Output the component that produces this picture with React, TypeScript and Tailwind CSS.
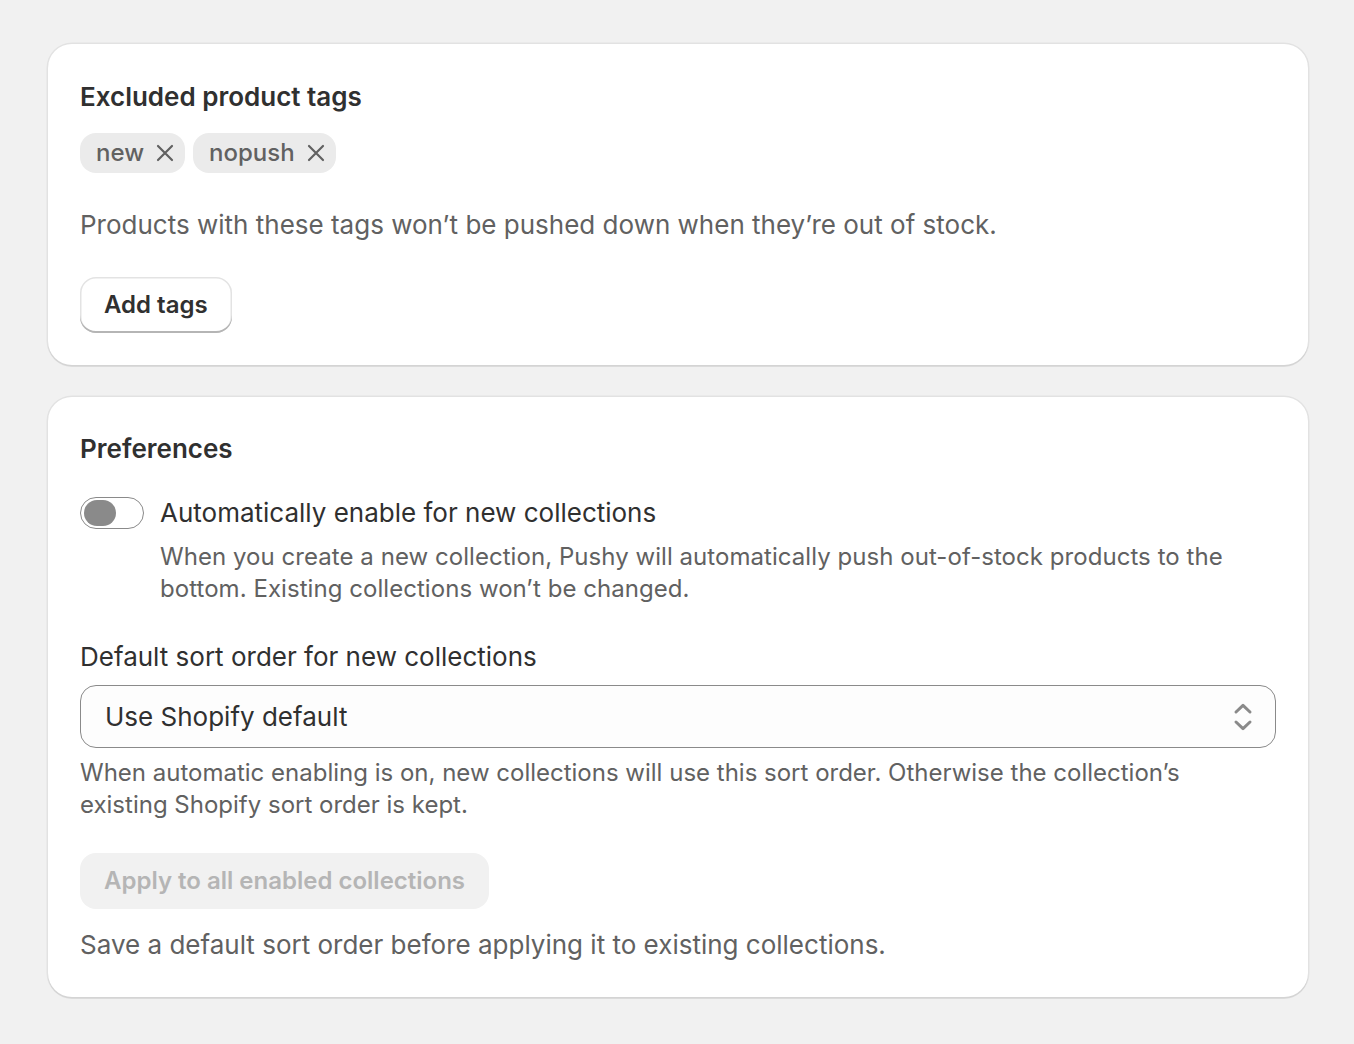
import React, { useState } from 'react';

const Card = ({ children, className = '' }: { children: React.ReactNode; className?: string }) => (
  <div
    className={`bg-white rounded-[24px] px-8 shadow-[0_2px_0_0_rgba(26,26,26,0.07),0_0_0_1.5px_rgba(0,0,0,0.06)] ${className}`}
  >
    {children}
  </div>
);

const Tag = ({ label }: { label: string }) => (
  <span className="inline-flex items-center h-10 pl-4 pr-[11px] gap-3 rounded-[16px] bg-[#ebebeb] text-[#616161] text-[24px] font-medium">
    {label}
    <svg width="18" height="18" viewBox="0 0 18 18" fill="none" className="text-[#616161]">
      <path d="M2 2l14 14M16 2L2 16" stroke="currentColor" strokeWidth="2.2" strokeLinecap="round" />
    </svg>
  </span>
);

const SelectIcon = () => (
  <svg width="24" height="32" viewBox="0 0 12 16" fill="none" className="text-[#8a8a8a]">
    <path d="M2.5 5.5L6 2.2l3.5 3.3M2.5 10.5L6 13.8l3.5-3.3" stroke="currentColor" strokeWidth="1.5" strokeLinecap="round" strokeLinejoin="round" />
  </svg>
);

export default function App() {
  const [enabled, setEnabled] = useState(false);

  return (
    <div className="min-h-screen bg-[#f1f1f1] pl-12 pr-[46px] pt-11 pb-12 font-['Inter',sans-serif] text-[#303030] antialiased">
      <div className="flex flex-col gap-8">
        <Card className="pt-[33px] pb-8">
          <h2 className="text-[26px] leading-[40px] font-semibold">Excluded product tags</h2>
          <div className="mt-4 flex gap-2">
            <Tag label="new" />
            <Tag label="nopush" />
          </div>
          <p className="mt-8 text-[26px] leading-[40px] text-[#616161]">
            Products with these tags won’t be pushed down when they’re out of stock.
          </p>
          <button className="mt-8 h-14 px-6 rounded-[16px] bg-white text-[24px] font-semibold text-[#303030] shadow-[inset_0_-2px_0_0_#b5b5b5,inset_0_0_0_1.5px_#e3e3e3]">
            Add tags
          </button>
        </Card>

        <Card className="pt-8 pb-9">
          <h2 className="text-[26px] leading-[40px] font-semibold">Preferences</h2>
          <div className="mt-6 flex gap-4">
            <button
              onClick={() => setEnabled(!enabled)}
              className="mt-1 shrink-0 w-16 h-8 rounded-full border-[1.5px] border-[#8a8a8a] bg-white flex items-center px-[3px]"
            >
              <span className="w-8 h-[26px] rounded-full bg-[#8a8a8a]" />
            </button>
            <div>
              <div className="text-[26px] leading-[40px]">Automatically enable for new collections</div>
              <p className="mt-2 text-[24px] leading-[32px] text-[#616161] tracking-[0.05px]">
                When you create a new collection, Pushy will automatically push out-of-stock products to the bottom. Existing collections won’t be changed.
              </p>
            </div>
          </div>

          <div className="mt-9 text-[26px] leading-[32px]">Default sort order for new collections</div>
          <div className="mt-3 h-[63px] rounded-[16px] border-[1.5px] border-[#8a8a8a] bg-[#fdfdfd] flex items-center justify-between pl-6 pr-5">
            <span className="text-[26px] text-[#303030]">Use Shopify default</span>
            <SelectIcon />
          </div>
          <p className="mt-[9px] max-w-[1160px] text-[24px] leading-[32px] text-[#616161]">
            When automatic enabling is on, new collections will use this sort order. Otherwise the collection’s existing Shopify sort order is kept.
          </p>

          <button
            disabled
            className="mt-8 h-14 px-6 rounded-[16px] bg-[#f1f1f1] text-[24px] font-semibold text-[#b5b5b5]"
          >
            Apply to all enabled collections
          </button>
          <p className="mt-5 text-[26px] leading-[32px] text-[#616161]">
            Save a default sort order before applying it to existing collections.
          </p>
        </Card>
      </div>
    </div>
  );
}
